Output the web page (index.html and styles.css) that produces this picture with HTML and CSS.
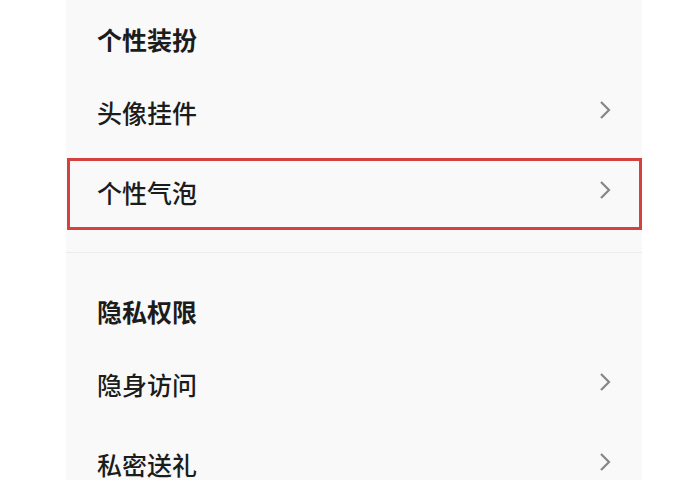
FILE: index.html
```html
<!DOCTYPE html>
<html lang="zh-CN">
<head>
<meta charset="utf-8">
<title>设置</title>
<link rel="stylesheet" href="styles.css">
</head>
<body>
<div class="panel">
  <section class="section first">
    <div class="title">个性装扮</div>
    <div class="item item-a">
      <span class="label">头像挂件</span>
      <svg class="chev" width="12" height="20" viewBox="0 0 12 20"><polyline points="2,2 10,10 2,18" fill="none" stroke="#868686" stroke-width="2.2"/></svg>
    </div>
    <div class="item highlight">
      <span class="label">个性气泡</span>
      <svg class="chev" width="12" height="20" viewBox="0 0 12 20"><polyline points="2,2 10,10 2,18" fill="none" stroke="#868686" stroke-width="2.2"/></svg>
    </div>
  </section>
  <div class="divider"></div>
  <section class="section second">
    <div class="title">隐私权限</div>
    <div class="item item-b">
      <span class="label">隐身访问</span>
      <svg class="chev" width="12" height="20" viewBox="0 0 12 20"><polyline points="2,2 10,10 2,18" fill="none" stroke="#868686" stroke-width="2.2"/></svg>
    </div>
    <div class="item item-last">
      <span class="label">私密送礼</span>
      <svg class="chev" width="12" height="20" viewBox="0 0 12 20"><polyline points="2,2 10,10 2,18" fill="none" stroke="#868686" stroke-width="2.2"/></svg>
    </div>
  </section>
</div>
</body>
</html>
```
FILE: styles.css
```css
html, body {
  margin: 0;
  padding: 0;
  background: #ffffff;
}
body {
  font-family: "Noto Sans CJK SC", "Noto Sans", sans-serif;
  color: #1c1c1c;
}
.panel {
  margin-left: 66px;
  width: 576px;
  height: 480px;
  background: #f9f9f9;
}
.section {
  display: flex;
  flex-direction: column;
}
.title {
  height: 78px;
  display: flex;
  align-items: center;
  padding-left: 31px;
  font-size: 25px;
  font-weight: 700;
  line-height: 26px;
}
.second .title {
  margin-top: 25px;
  height: 66px;
}
.item {
  display: flex;
  align-items: center;
  justify-content: space-between;
  padding-left: 31px;
  padding-right: 31px;
  font-size: 25px;
  font-weight: 500;
  line-height: 26px;
}
.item-a {
  height: 68px;
}
.item-b {
  height: 80px;
}
.item-last {
  height: 60px;
  align-items: flex-start;
  padding-top: 27px;
  box-sizing: border-box;
}
.highlight {
  margin-top: 12px;
  margin-left: 1px;
  border: 3px solid #d3423e;
  padding-left: 27px;
  padding-right: 28px;
  padding-bottom: 4px;
  box-sizing: content-box;
  height: 62px;
}
.chev {
  display: block;
  margin-top: -4px;
}
.item-last .chev {
  margin-top: 1px;
}
.divider {
  margin-top: 22px;
  height: 1px;
  background: #ececec;
}
```
